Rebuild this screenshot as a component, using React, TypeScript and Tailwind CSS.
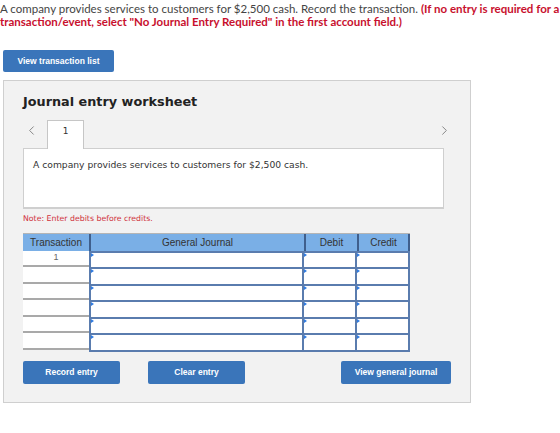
import { ChevronLeft, ChevronRight } from 'lucide-react';

const rows = [1, 2, 3, 4, 5, 6];

function InputCell({ width }: { width: string }) {
  return (
    <div className={`relative h-full bg-white ${width}`}>
      <span className="absolute left-0 top-0 h-0 w-0 border-y-[2px] border-l-[3px] border-y-transparent border-l-[#2f7be0]" />
    </div>
  );
}

export default function App() {
  return (
    <div className="relative h-[433px] w-[560px] overflow-hidden bg-white">
      <p className="whitespace-nowrap pt-[2px] text-[11.5px] leading-[13px] text-[#444]" style={{ fontFamily: 'Lato, sans-serif' }}>
        A company provides services to customers for $2,500 cash. Record the transaction.{' '}
        <span className="font-bold text-[#c8102e]">(If no entry is required for a</span>
        <br />
        <span className="font-bold text-[#c8102e]">transaction/event, select "No Journal Entry Required" in the first account field.)</span>
      </p>

      <button className="ml-[3px] mt-[22px] h-[22px] w-[111px] rounded-[2px] bg-[#3a75ba] text-[8.5px] font-bold text-white" style={{ fontFamily: '"Liberation Sans", Arial, sans-serif' }}>
        View transaction list
      </button>

      <div className="ml-[3px] mt-[8px] h-[323px] w-[468px] border border-[#cfcfcf] bg-[#f2f2f2] px-[19px] pt-[11px]">
        <h2 className="text-[12.8px] font-bold text-[#222]" style={{ fontFamily: '"DejaVu Sans", Verdana, sans-serif' }}>
          Journal entry worksheet
        </h2>

        <div className="relative mt-[9px] w-[421px]">
          <div className="flex h-[28px] items-start">
            <ChevronLeft className="ml-[1px] mt-[3px] h-[15px] w-[15px] text-[#888]" strokeWidth={1.6} />
            <div className="relative z-10 ml-[8px] flex h-[29px] w-[37px] justify-center border border-b-0 border-[#c6c6c6] bg-white pt-[4px] text-[9px] text-[#333]" style={{ fontFamily: '"DejaVu Sans", Verdana, sans-serif' }}>
              1
            </div>
            <ChevronRight className="ml-auto mr-[-8px] mt-[3px] h-[15px] w-[15px] text-[#888]" strokeWidth={1.6} />
          </div>
          <div className="h-[61px] border border-b-2 border-[#cfcfcf] bg-white px-[9px] pt-[9px] text-[9.2px] text-[#333]" style={{ fontFamily: '"DejaVu Sans", Verdana, sans-serif' }}>
            A company provides services to customers for $2,500 cash.
          </div>
        </div>

        <p className="mt-[4px] text-[7.8px] text-[#d0313b]" style={{ fontFamily: '"DejaVu Sans", Verdana, sans-serif' }}>
          Note: Enter debits before credits.
        </p>

        <div className="mt-[8px] w-[387px] text-[10px]" style={{ fontFamily: '"Liberation Sans", Arial, sans-serif' }}>
          <div className="flex h-[18px] border-t border-[#b5b5b5] bg-[#7aafe6] text-[#333]">
            <div className="flex w-[66px] items-center justify-center">Transaction</div>
            <div className="flex w-[215px] items-center justify-center border-l-2 border-[#3f5f8c]">General Journal</div>
            <div className="flex w-[53px] items-center justify-center border-l-2 border-[#3f5f8c]">Debit</div>
            <div className="flex w-[53px] items-center justify-center border-x-2 border-[#3f5f8c]">Credit</div>
          </div>
          {rows.map((r) => (
            <div key={r} className="flex h-[16.5px]">
              <div className="flex w-[66px] items-center justify-center border-b-2 border-[#a9a9a9] bg-white text-[9px] text-[#666]">
                {r === 1 ? '1' : ''}
              </div>
              <div className="flex w-[321px] gap-[2px] bg-[#5a7cae] px-[2px] pt-[2px]">
                <InputCell width="w-[211px]" />
                <InputCell width="w-[51px]" />
                <InputCell width="w-[51px]" />
              </div>
            </div>
          ))}
          <div className="flex h-[2px]">
            <div className="w-[66px]" />
            <div className="w-[321px] bg-[#5a7cae]" />
          </div>
        </div>

        <div className="mt-[9px] flex text-[8.5px] font-bold text-white" style={{ fontFamily: '"Liberation Sans", Arial, sans-serif' }}>
          <button className="h-[23px] w-[97px] rounded-[2px] bg-[#3a75ba]">Record entry</button>
          <button className="ml-[28px] h-[23px] w-[97px] rounded-[2px] bg-[#3a75ba]">Clear entry</button>
          <button className="ml-[96px] h-[23px] w-[110px] rounded-[2px] bg-[#3a75ba]">View general journal</button>
        </div>
      </div>
    </div>
  );
}
